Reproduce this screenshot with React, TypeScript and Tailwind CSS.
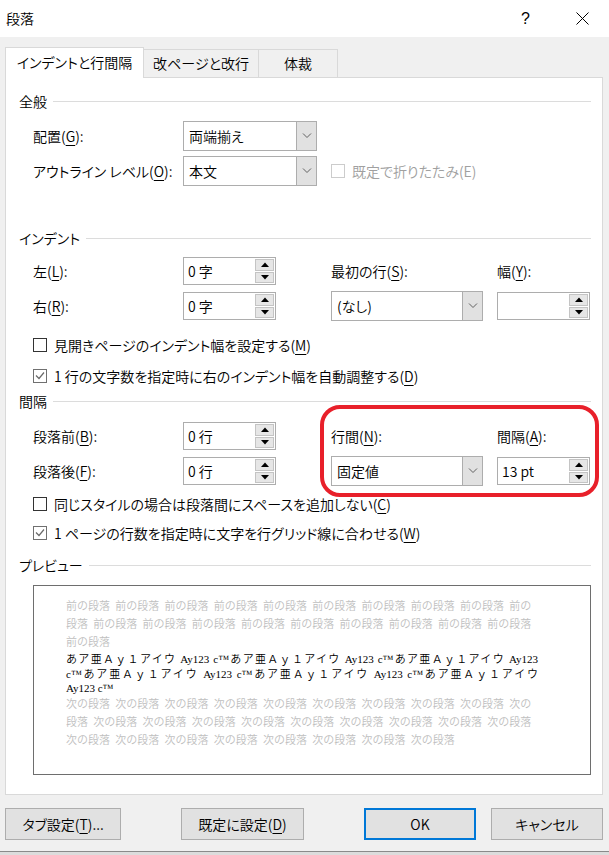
import React from "react";

const FONT = "font-['Noto_Sans_CJK_JP',sans-serif] [font-feature-settings:'palt'] [font-weight:350]";

type MnProps = { pre: string; k: string; post?: string };

// label with access-key underline, e.g. 配置(G):
const Mn = ({ pre, k, post = "):" }: MnProps) => (
  <>
    {pre}
    <span className="underline decoration-1 underline-offset-[3px]">{k}</span>
    {post}
  </>
);

const SectionTitle = ({ title, className }: { title: string; className: string }) => (
  <div className={`flex h-[20px] items-center ${className}`}>
    <span className="leading-none">{title}</span>
    <div className="ml-[6px] h-px flex-1 bg-[#dcdcdc]" />
  </div>
);

const Chevron = () => (
  <svg width="10" height="6" viewBox="0 0 10 6">
    <path d="M1 0.5l4 4 4-4" fill="none" stroke="#606060" strokeWidth="1" />
  </svg>
);

const Tri = ({ up = false }: { up?: boolean }) => (
  <svg width="8" height="5" viewBox="0 0 8 5">
    <path d={up ? "M0 5L4 0.5L8 5Z" : "M0 0L8 0L4 4.5Z"} fill="#000" />
  </svg>
);

const Select = ({ value, w }: { value: string; w: string }) => (
  <div className={`flex h-[30px] border border-[#adadad] bg-white ${w}`}>
    <div className="flex flex-1 items-center pl-[5px]">{value}</div>
    <div className="flex w-[20px] items-center justify-center border-l border-[#adadad] bg-[#e1e1e1]">
      <Chevron />
    </div>
  </div>
);

const Spinner = ({ value }: { value: string }) => (
  <div className="flex h-[28px] w-[93px] border border-[#adadad] bg-white p-px">
    <div className="flex flex-1 items-center pl-[3px]">{value}</div>
    <div className="flex w-[19px] flex-col gap-px">
      <div className="flex flex-1 items-center justify-center border border-[#c4c4c4] bg-[#e6e6e6]">
        <Tri up />
      </div>
      <div className="flex flex-1 items-center justify-center border border-[#c4c4c4] bg-[#e6e6e6]">
        <Tri />
      </div>
    </div>
  </div>
);

const Check = ({ checked = false, disabled = false }: { checked?: boolean; disabled?: boolean }) => {
  const border = disabled ? "border-[#cccccc]" : checked ? "border-[#707070]" : "border-[#333333]";
  return (
    <div className={`flex h-[14px] w-[14px] shrink-0 items-center justify-center border bg-white ${border}`}>
      {checked && (
        <svg width="10" height="8" viewBox="0 0 10 8">
          <path d="M1 3.5l3 3 5-6" fill="none" stroke="#6a6a6a" strokeWidth="1.2" />
        </svg>
      )}
    </div>
  );
};

const CheckRow = ({
  checked = false,
  className,
  children,
}: {
  checked?: boolean;
  className: string;
  children: React.ReactNode;
}) => (
  <div className={`ml-[14px] flex h-[20px] items-center gap-[7px] ${className}`}>
    <Check checked={checked} />
    <span>{children}</span>
  </div>
);

const Btn = ({ className, children }: { className: string; children: React.ReactNode }) => (
  <div className={`flex h-[32px] items-center justify-center bg-[#e1e1e1] ${className}`}>{children}</div>
);

const rep = (word: string, n: number) => Array(n).fill(word).join(" ");
const sample = "あア亜Ａｙ１アイウ Ay123 c™";

export default function App() {
  return (
    <div className={`relative flex h-[855px] w-[609px] flex-col overflow-hidden bg-[#f0f0f0] text-[14px] text-black ${FONT}`}>
      {/* title bar */}
      <div className="flex h-[37px] shrink-0 items-center bg-white pl-[6px]">
        <span>段落</span>
        <span className="ml-auto font-['Liberation_Sans',sans-serif] text-[16px] leading-none">?</span>
        <svg className="ml-[46px] mr-[20px]" width="13" height="13" viewBox="0 0 13 13">
          <path d="M0.5 0.5l12 12M12.5 0.5l-12 12" stroke="#000" strokeWidth="1" />
        </svg>
      </div>

      <div className="flex-1 pl-[5px] pr-[6px] pt-[10px]">
        {/* tabs */}
        <div className="flex h-[31px] items-start">
          <div className="relative z-10 flex h-[31px] w-[139px] items-center justify-center border-x border-t border-[#d9d9d9] bg-white pb-[2px]">
            インデントと行間隔
          </div>
          <div className="mt-[2px] flex h-[28px] w-[115px] items-center justify-center border-r border-t border-[#d9d9d9]">
            改ページと改行
          </div>
          <div className="mt-[2px] flex h-[28px] w-[79px] items-center justify-center border-r border-t border-[#d9d9d9]">
            体裁
          </div>
        </div>

        {/* panel */}
        <div className="-mt-px flex h-[718px] flex-col border border-[#d9d9d9] bg-white pl-[13px] pr-[11px]">
          <SectionTitle title="全般" className="mt-[13px]" />
          <div className="ml-[14px] mt-[10px] flex h-[30px] items-center">
            <div className="w-[150px]">
              <Mn pre="配置(" k="G" />
            </div>
            <Select value="両端揃え" w="w-[134px]" />
          </div>
          <div className="ml-[14px] mt-[5px] flex h-[30px] items-center">
            <div className="w-[150px]">
              <Mn pre="アウトライン レベル(" k="O" />
            </div>
            <Select value="本文" w="w-[134px]" />
            <div className="ml-[14px] flex items-center gap-[7px] text-[#a0a0a0]">
              <Check disabled />
              <span>既定で折りたたみ(E)</span>
            </div>
          </div>

          <SectionTitle title="インデント" className="mt-[42px]" />
          <div className="ml-[14px] mt-[9px] flex h-[28px] items-center">
            <div className="w-[150px]">
              <Mn pre="左(" k="L" />
            </div>
            <Spinner value="0 字" />
            <div className="ml-[55px] w-[152px]">
              <Mn pre="最初の行(" k="S" />
            </div>
            <div className="ml-[14px]">
              <Mn pre="幅(" k="Y" />
            </div>
          </div>
          <div className="ml-[14px] mt-[7px] flex h-[28px] items-center">
            <div className="w-[150px]">
              <Mn pre="右(" k="R" />
            </div>
            <Spinner value="0 字" />
            <div className="ml-[55px]">
              <Select value="(なし)" w="w-[152px]" />
            </div>
            <div className="ml-[14px]">
              <Spinner value="" />
            </div>
          </div>
          <CheckRow className="mt-[15px]">
            <Mn pre="見開きページのインデント幅を設定する(" k="M" post=")" />
          </CheckRow>
          <CheckRow checked className="mt-[11px]">
            <Mn pre={"1\u00a0行の文字数を指定時に右のインデント幅を自動調整する("} k="D" post=")" />
          </CheckRow>

          <SectionTitle title="間隔" className="mt-[5px]" />
          <div className="ml-[14px] mt-[11px] flex h-[28px] items-center">
            <div className="w-[150px]">
              <Mn pre="段落前(" k="B" />
            </div>
            <Spinner value="0 行" />
            <div className="ml-[55px] w-[152px]">
              <Mn pre="行間(" k="N" />
            </div>
            <div className="ml-[14px]">
              <Mn pre="間隔(" k="A" />
            </div>
          </div>
          <div className="ml-[14px] mt-[7px] flex h-[28px] items-center">
            <div className="w-[150px]">
              <Mn pre="段落後(" k="F" />
            </div>
            <Spinner value="0 行" />
            <div className="ml-[55px]">
              <Select value="固定値" w="w-[152px]" />
            </div>
            <div className="ml-[14px]">
              <Spinner value="13 pt" />
            </div>
          </div>
          <CheckRow className="mt-[9px]">
            <Mn pre="同じスタイルの場合は段落間にスペースを追加しない(" k="C" post=")" />
          </CheckRow>
          <CheckRow checked className="mt-[9px]">
            <Mn pre={"1\u00a0ページの行数を指定時に文字を行グリッド線に合わせる("} k="W" post=")" />
          </CheckRow>

          <SectionTitle title="プレビュー" className="mt-[12px]" />
          <div className="ml-[14px] mt-[10px] h-[190px] border border-[#6e6e6e] pl-[32px] pt-[11px] font-['Liberation_Serif','Noto_Sans_CJK_JP',serif] text-[11px] [font-feature-settings:normal]">
            <div className="leading-[18px] text-[#c0c0c0] [word-spacing:2.5px]">
              <div>{rep("前の段落", 9) + " 前の"}</div>
              <div>{"段落 " + rep("前の段落", 9)}</div>
              <div>前の段落</div>
            </div>
            <div className="w-[472px] pt-px leading-[15px] text-black">
              <div className="text-justify [text-align-last:justify]">{sample + sample + "あア亜Ａｙ１アイウ Ay123"}</div>
              <div className="text-justify [text-align-last:justify]">{"c™" + sample + sample + "あア亜Ａｙ１アイウ"}</div>
              <div className="leading-[13px]">Ay123 c™</div>
            </div>
            <div className="leading-[18px] text-[#c0c0c0] [word-spacing:2.5px]">
              <div>{rep("次の段落", 9) + " 次の"}</div>
              <div>{"段落 " + rep("次の段落", 9)}</div>
              <div>{rep("次の段落", 8)}</div>
            </div>
          </div>
        </div>

        {/* buttons */}
        <div className="mt-[13px] flex h-[32px]">
          <Btn className="w-[116px] border border-[#adadad]">
            <Mn pre="タブ設定(" k="T" post=")..." />
          </Btn>
          <Btn className="ml-[60px] w-[123px] border border-[#adadad]">
            <Mn pre="既定に設定(" k="D" post=")" />
          </Btn>
          <Btn className="ml-auto w-[112px] border-2 border-[#0078d7]">OK</Btn>
          <Btn className="ml-[15px] w-[112px] border border-[#adadad]">キャンセル</Btn>
        </div>
      </div>
      <div className="h-[4px] shrink-0 border-t border-[#8a8a8a] bg-[#dcdcdc]" />

      {/* red annotation around 行間 / 間隔 */}
      <div className="pointer-events-none absolute left-[320px] top-[405px] h-[92px] w-[279px] rounded-[20px] border-4 border-[#e8202a]" />
    </div>
  );
}
